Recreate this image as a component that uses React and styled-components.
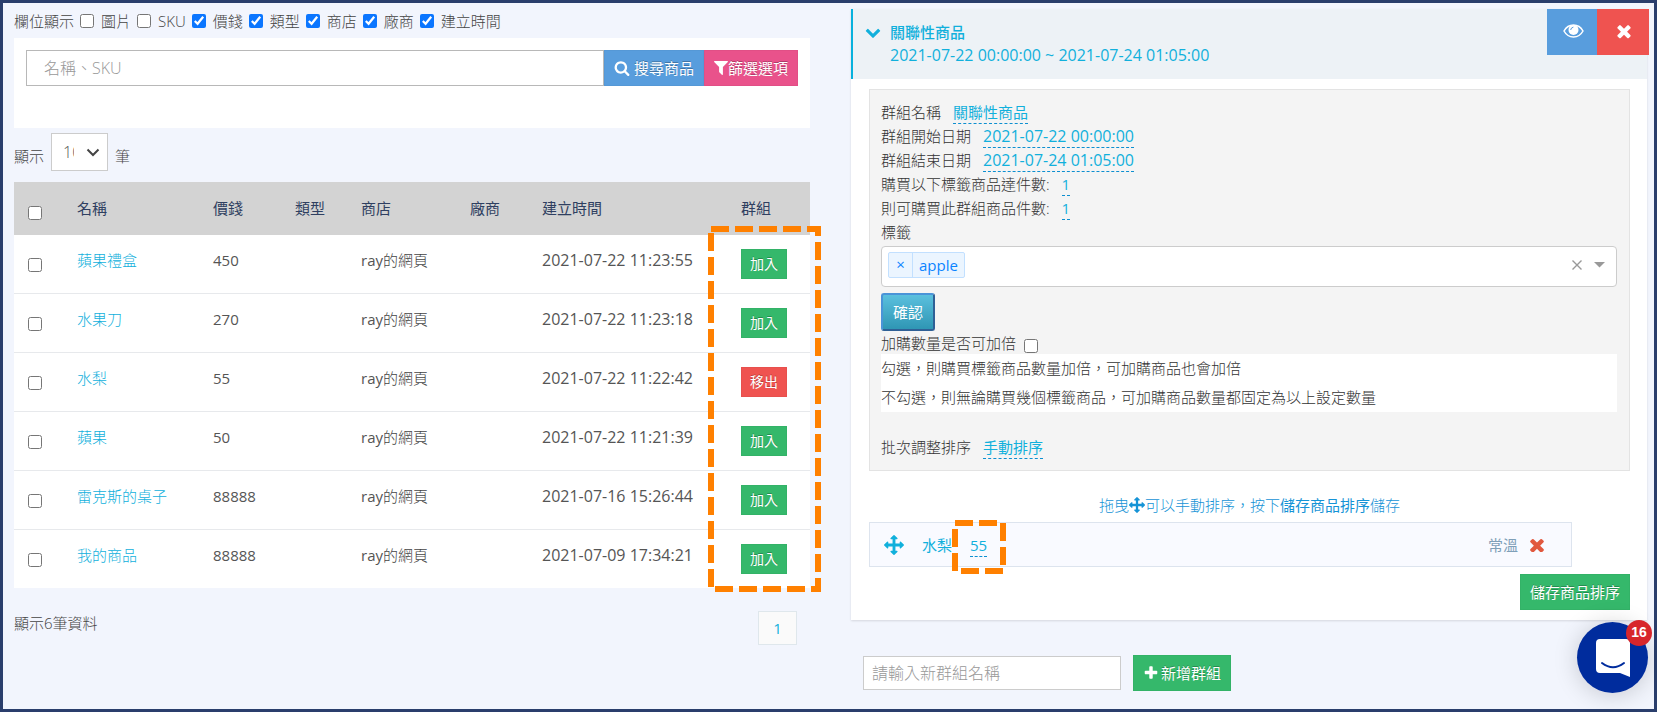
import React from "react";
import styled, { createGlobalStyle, css } from "styled-components";

const GlobalStyle = createGlobalStyle`
  *, *::before, *::after { box-sizing: border-box; }
  body {
    margin: 0;
    background: #f2f5fd;
    color: #444;
    font-family: "Open Sans", "Noto Sans CJK TC", sans-serif;
    font-size: 15px;
    font-weight: 300;
    line-height: 24px;
  }
  button, input, select { font: inherit; margin: 0; border-radius: 0; }
  button { cursor: pointer; }
  p { margin: 0; }
`;

const COLORS = {
  link: "#11b0dc",
  green: "#35b86b",
  red: "#ef5350",
  blue: "#589ddd",
  pink: "#e9528b",
  orange: "#ff8000",
};

/* ---------- icons ---------- */

const ICONS = {
  times:
    "M1490 1322q0 40-28 68l-136 136q-28 28-68 28t-68-28l-294-294-294 294q-28 28-68 28t-68-28l-136-136q-28-28-28-68t28-68l294-294-294-294q-28-28-28-68t28-68l136-136q28-28 68-28t68 28l294 294 294-294q28-28 68-28t68 28l136 136q28 28 28 68t-28 68l-294 294 294 294q28 28 28 68z",
  search:
    "M1216 832q0-185-131.5-316.5t-316.5-131.5-316.5 131.5-131.5 316.5 131.5 316.5 316.5 131.5 316.5-131.5 131.5-316.5zm512 832q0 52-38 90t-90 38q-54 0-90-38l-343-342q-179 124-399 124-143 0-273.5-55.5t-225-150-150-225-55.5-273.5 55.5-273.5 150-225 225-150 273.5-55.5 273.5 55.5 225 150 150 225 55.5 273.5q0 220-124 399l343 343q37 37 37 90z",
  filter:
    "M1595 295q17 41-14 70l-493 493v742q0 42-39 59-13 5-25 5-27 0-45-19l-256-256q-19-19-19-45v-486l-493-493q-31-29-14-70 17-39 59-39h1280q42 0 59 39z",
  plus: "M1600 736v192q0 40-28 68t-68 28h-416v416q0 40-28 68t-68 28h-192q-40 0-68-28t-28-68v-416h-416q-40 0-68-28t-28-68v-192q0-40 28-68t68-28h416v-416q0-40 28-68t68-28h192q40 0 68 28t28 68v416h416q40 0 68 28t28 68z",
  arrows:
    "M1792 896q0 26-19 45l-256 256q-19 19-45 19t-45-19-19-45v-128h-384v384h128q26 0 45 19t19 45-19 45l-256 256q-19 19-45 19t-45-19l-256-256q-19-19-19-45t19-45 45-19h128v-384h-384v128q0 26-19 45t-45 19-45-19l-256-256q-19-19-19-45t19-45l256-256q19-19 45-19t45 19 19 45v128h384v-384h-128q-26 0-45-19t-19-45 19-45l256-256q19-19 45-19t45 19l256 256q19 19 19 45t-19 45-45 19h-128v384h384v-128q0-26 19-45t45-19 45 19l256 256q19 19 19 45z",
  chevron:
    "M1683 808l-742 741q-19 19-45 19t-45-19l-742-741q-19-19-19-45.5t19-45.5l166-165q19-19 45-19t45 19l531 531 531-531q19-19 45-19t45 19l166 165q19 19 19 45.5t-19 45.5z",
};

const IconSvg = styled.svg`
  flex: none;
  width: ${(p) => p.$size}px;
  height: ${(p) => p.$size}px;
  fill: currentColor;
`;

function Icon({ name, size = 16, box = "0 0 1792 1792" }) {
  return (
    <IconSvg $size={size} viewBox={box} aria-hidden="true">
      <path d={ICONS[name]} />
    </IconSvg>
  );
}

function EyeIcon() {
  return (
    <svg width="21" height="14" viewBox="0 0 21 14" fill="none" aria-hidden="true">
      <path
        d="M1 7C3.200 3 6.600 1 10.500 1S17.800 3 20 7c-2.200 4-5.600 6-9.500 6S3.200 11 1 7z"
        stroke="#fff"
        strokeWidth="1.500"
      />
      <circle cx="10.500" cy="5.900" r="5" fill="#fff" />
      <path d="M7.700 5.600Q8 3.500 10 3.200" stroke={COLORS.blue} strokeWidth="1" strokeLinecap="round" />
    </svg>
  );
}

/* ---------- shared parts ---------- */

const Checkbox = styled.input.attrs({ type: "checkbox" })`
  flex: none;
  display: block;
  width: 14px;
  height: 14px;
  accent-color: #0b76ff;
`;

const Button = styled.button`
  display: inline-flex;
  align-items: center;
  justify-content: center;
  flex: none;
  height: ${(p) => (p.$small ? 30 : 36)}px;
  padding: 0 ${(p) => (p.$small ? 8 : 9)}px;
  gap: ${(p) => p.$gap || 0}px;
  border: 1px solid rgba(0, 0, 0, 0.03);
  background: ${(p) => COLORS[p.$tone]};
  color: #fff;
  font-size: ${(p) => (p.$small ? 14 : 15)}px;
  font-weight: 400;
  white-space: nowrap;
  text-shadow: 0 -1px 0 rgba(0, 0, 0, 0.25);
`;

const Link = styled.a`
  color: ${COLORS.link};
  text-decoration: none;
`;

const Editable = styled(Link)`
  display: inline-block;
  height: 24px;
  border-bottom: 1px dashed #0d8fd0;
  font-size: ${(p) => (p.$date ? 16 : 15)}px;
  font-weight: 400;
`;

const DashedBox = styled.svg`
  position: absolute;
  pointer-events: none;
  overflow: visible;
  z-index: 2;
  rect {
    width: calc(100% - 6px);
    height: calc(100% - 6px);
    fill: none;
    stroke: ${COLORS.orange};
    stroke-width: 6;
    stroke-dasharray: 18 6;
  }
`;

const TableMarker = styled(DashedBox)`
  top: 44px;
  right: -11px;
  width: 113px;
  height: calc(100% - 40px);
`;

const PriceMarker = styled(DashedBox)`
  top: -13px;
  left: -18px;
  width: 54px;
  height: 54px;
`;

/* ---------- page ---------- */

const Page = styled.div`
  min-height: 100vh;
  border: 3px solid #2a3e6c;
  display: grid;
  grid-template-columns: minmax(0, 1fr) minmax(0, 1fr);
  gap: 41px;
  padding: 6px 7px 15px 11px;
`;

const Column = styled.div`
  display: flex;
  flex-direction: column;
`;

/* ---------- product list ---------- */

const FieldBar = styled.div`
  display: flex;
  align-items: center;
  gap: 6px;
  height: 29px;
  padding-bottom: 5px;
`;

const FieldOption = styled.label`
  display: flex;
  align-items: center;
  gap: 7px;
`;

const SearchPanel = styled.form`
  display: flex;
  align-items: flex-start;
  height: 90px;
  padding: 12px;
  background: #fff;
`;

const SearchInput = styled.input`
  flex: 1;
  min-width: 0;
  height: 36px;
  padding: 0 17px;
  border: 1px solid #b8b8b8;
  background: #fff;
  font-size: 16px;
  &::placeholder { color: #999; opacity: 1; }
`;

const LengthBar = styled.label`
  display: flex;
  align-items: center;
  gap: 7px;
  padding: 5px 0 11px;
`;

const LengthLabel = styled.span`
  padding-top: 8px;
`;

const LengthBox = styled.span`
  position: relative;
  display: flex;
  svg {
    position: absolute;
    top: 15px;
    right: 8px;
    pointer-events: none;
  }
`;

const LengthSelect = styled.select`
  appearance: none;
  width: 57px;
  height: 38px;
  padding: 0 33px 0 11px;
  border: 1px solid #ccc;
  background: #fff;
  color: #555;
  font-size: 16px;
`;

const TableWrap = styled.div`
  position: relative;
`;

const Table = styled.table`
  width: 100%;
  table-layout: fixed;
  border-collapse: separate;
  border-spacing: 0;
  background: #fff;
  white-space: nowrap;
`;

const cell = css`
  padding: 0 0 0 10px;
  text-align: left;
  vertical-align: top;
`;

const Th = styled.th`
  ${cell};
  height: 53px;
  padding-top: 14px;
  background: #d3d3d3;
  color: #2f3f61;
  font-weight: 400;
`;

const Td = styled.td`
  ${cell};
  height: ${(p) => (p.$last ? 58 : 59)}px;
  padding-top: ${(p) => (p.$action ? 14 : 13)}px;
  border-bottom: ${(p) => (p.$last ? 0 : 1)}px solid #e7e9ec;
  font-size: ${(p) => (p.$date ? 16 : 15)}px;
`;

const Num = styled.span`
  color: #555;
  font-weight: 400;
`;

const CheckSlot = styled.div`
  padding: 10px 0 0 4px;
`;

const TableFoot = styled.div`
  display: flex;
  justify-content: space-between;
  padding: 23px 13px 0 0;
`;

const PageButton = styled.button`
  width: 39px;
  height: 34px;
  border: 1px solid #dfe7ec;
  background: #fafafa;
  color: ${COLORS.link};
  font-weight: 400;
`;

/* ---------- group card ---------- */

const Card = styled.section`
  background: #fff;
  box-shadow: 0 1px 2px rgba(0, 0, 0, 0.12);
`;

const CardHeader = styled.header`
  display: flex;
  justify-content: space-between;
  height: 70px;
  padding-left: 12px;
  border-left: 2px solid #08b1dd;
  background: #edf2f6;
  color: ${COLORS.link};
`;

const CardTitle = styled.div`
  display: flex;
  align-items: flex-start;
  gap: 9px;
  padding-top: 12px;
  svg { margin-top: 3px; }
`;

const TitleText = styled.h2`
  margin: 0;
  font-size: 15px;
  font-weight: 500;
  line-height: 23px;
`;

const TitleDates = styled.span`
  display: block;
  font-size: 16px;
`;

const HeaderActions = styled.div`
  display: flex;
  flex: none;
  margin-right: -2px;
`;

const HeaderButton = styled.button`
  display: flex;
  align-items: center;
  justify-content: center;
  width: ${(p) => p.$width}px;
  height: 46px;
  padding: 0 0 2px 2px;
  border: 0;
  background: ${(p) => COLORS[p.$tone]};
  color: #fff;
`;

const CardBody = styled.div`
  display: flex;
  flex-direction: column;
  padding: 10px 17px 10px 18px;
`;

const Settings = styled.div`
  min-height: 381px;
  padding: 10px 12px 11px 11px;
  border: 1px solid #e3e3e3;
  background: #f4f4f4;
  color: #333;
`;

const Field = styled.div`
  display: flex;
  gap: 12px;
  height: 24px;
`;

const TagLabel = styled.label`
  display: block;
  height: 26px;
`;

const TagSelect = styled.div`
  display: flex;
  align-items: center;
  height: 41px;
  padding: 0 11px 3px 6px;
  border: 1px solid #ccc;
  border-radius: 4px;
  background: #fff;
`;

const Tag = styled.span`
  display: flex;
  height: 26px;
  border: 1px solid #c2e0ff;
  border-radius: 2px;
  background: #ebf5ff;
  color: #0a84ff;
  font-weight: 400;
`;

const TagRemove = styled.button`
  width: 24px;
  padding: 0 0 2px;
  border: 0;
  border-right: 1px solid #c2e0ff;
  background: none;
  color: inherit;
  line-height: 20px;
`;

const TagText = styled.span`
  padding: 0 6px;
`;

const TagInput = styled.input`
  flex: 1;
  min-width: 0;
  border: 0;
  outline: 0;
  background: none;
`;

const SelectControl = styled.button`
  display: flex;
  padding: 0;
  margin-left: 12px;
  border: 0;
  background: none;
  color: #999;
`;

const ConfirmButton = styled.button`
  display: block;
  height: 38px;
  margin: 6px 0 0;
  padding: 0 10px;
  border: 2px solid;
  border-color: #4a94d8 #2f6096 #2f6096 #4a94d8;
  border-radius: 3px;
  background: linear-gradient(#5bc0de, #2f96b4);
  color: #fff;
  font-weight: 400;
  line-height: 20px;
`;

const MultiplyField = styled.label`
  display: flex;
  gap: 8px;
  height: 23px;
  input { margin-top: 8px; }
`;

const Notes = styled.div`
  background: #fff;
  margin-bottom: 23px;
  p { line-height: 29px; }
`;

const Hint = styled.p`
  display: flex;
  align-items: center;
  justify-content: center;
  margin: 22px 0 5px;
  color: #1593d6;
  strong { font-weight: 400; }
`;

const Item = styled.div`
  display: flex;
  align-items: center;
  height: 45px;
  margin-right: 58px;
  padding: 0 27px 0 14px;
  border: 1px solid #dde4ee;
  background: #f9faff;
  color: ${COLORS.link};
`;

const ItemName = styled.span`
  margin: 0 18px;
  font-weight: 400;
`;

const ItemPrice = styled.span`
  position: relative;
  height: 24px;
`;

const ItemTemp = styled.span`
  margin: 0 12px 0 auto;
  color: #7f9fb8;
  font-weight: 400;
`;

const RemoveButton = styled.button`
  display: flex;
  padding: 0;
  border: 0;
  background: none;
  color: #e1583e;
`;

const SaveRow = styled.div`
  display: flex;
  justify-content: flex-end;
  margin-top: 7px;
`;

const NewGroup = styled.form`
  display: flex;
  align-items: center;
  gap: 12px;
  padding: 35px 12px 0;
`;

const NewGroupInput = styled.input`
  width: 258px;
  height: 34px;
  padding: 0 8px;
  border: 1px solid #ccc;
  background: #fff;
  font-size: 16px;
  &::placeholder { color: #999; opacity: 1; }
`;

/* ---------- chat launcher ---------- */

const Launcher = styled.button`
  position: fixed;
  right: 9px;
  bottom: 19px;
  width: 71px;
  height: 71px;
  padding: 0;
  border: 0;
  border-radius: 50%;
  background: #002c9d;
  box-shadow: 0 2px 24px rgba(0, 0, 0, 0.18);
  display: flex;
  align-items: center;
  justify-content: center;
  z-index: 3;
`;

const LauncherBadge = styled.span`
  position: absolute;
  top: -2px;
  right: -4px;
  width: 26px;
  height: 26px;
  border-radius: 50%;
  background: #d7262b;
  color: #fff;
  font: bold 14px/25px "Liberation Sans", Arial, sans-serif;
  text-align: center;
`;

const FIELDS = [
  ["圖片", false],
  ["SKU", false],
  ["價錢", true],
  ["類型", true],
  ["商店", true],
  ["廠商", true],
  ["建立時間", true],
];

const COLUMNS = [
  ["名稱", undefined],
  ["價錢", 82],
  ["類型", 66],
  ["商店", 109],
  ["廠商", 72],
  ["建立時間", 199],
  ["群組", 79],
];

const PRODUCTS = [
  { name: "蘋果禮盒", price: 450, time: "2021-07-22 11:23:55" },
  { name: "水果刀", price: 270, time: "2021-07-22 11:23:18" },
  { name: "水梨", price: 55, time: "2021-07-22 11:22:42", joined: true },
  { name: "蘋果", price: 50, time: "2021-07-22 11:21:39" },
  { name: "雷克斯的桌子", price: 88888, time: "2021-07-16 15:26:44" },
  { name: "我的商品", price: 88888, time: "2021-07-09 17:34:21" },
];

const SETTINGS = [
  { label: "群組名稱", value: "關聯性商品" },
  { label: "群組開始日期", value: "2021-07-22 00:00:00", date: true },
  { label: "群組結束日期", value: "2021-07-24 01:05:00", date: true },
  { label: "購買以下標籤商品達件數:", value: "1" },
  { label: "則可購買此群組商品件數:", value: "1" },
];

const stop = (e) => e.preventDefault();

function ProductList() {
  return (
    <Column>
      <FieldBar>
        <span>欄位顯示</span>
        {FIELDS.map(([label, on]) => (
          <FieldOption key={label}>
            <Checkbox defaultChecked={on} />
            {label}
          </FieldOption>
        ))}
      </FieldBar>
      <SearchPanel onSubmit={stop}>
        <SearchInput placeholder="名稱、SKU" aria-label="名稱、SKU" />
        <Button $tone="blue" $gap={4}>
          <Icon name="search" />
          搜尋商品
        </Button>
        <Button type="button" $tone="pink">
          <Icon name="filter" size={14} box="192 256 1408 1408" />
          篩選選項
        </Button>
      </SearchPanel>
      <LengthBar>
        <LengthLabel>顯示</LengthLabel>
        <LengthBox>
          <LengthSelect defaultValue="10">
            <option>10</option>
            <option>25</option>
            <option>50</option>
          </LengthSelect>
          <svg width="14" height="9" viewBox="0 0 14 9" fill="none" aria-hidden="true">
            <path d="M1.500 1.500L7 7l5.500-5.500" stroke="#444" strokeWidth="2" />
          </svg>
        </LengthBox>
        <LengthLabel>筆</LengthLabel>
      </LengthBar>
      <TableWrap>
        <Table>
          <colgroup>
            <col width={53} />
            {COLUMNS.map(([label, width]) => (
              <col key={label} width={width} />
            ))}
          </colgroup>
          <thead>
            <tr>
              <Th>
                <CheckSlot>
                  <Checkbox aria-label="全選" />
                </CheckSlot>
              </Th>
              {COLUMNS.map(([label]) => (
                <Th key={label}>{label}</Th>
              ))}
            </tr>
          </thead>
          <tbody>
            {PRODUCTS.map((p, i) => {
              const last = i === PRODUCTS.length - 1;
              return (
                <tr key={p.name}>
                  <Td $last={last}>
                    <CheckSlot>
                      <Checkbox aria-label={p.name} />
                    </CheckSlot>
                  </Td>
                  <Td $last={last}>
                    <Link href="#">{p.name}</Link>
                  </Td>
                  <Td $last={last}>
                    <Num>{p.price}</Num>
                  </Td>
                  <Td $last={last} />
                  <Td $last={last}>
                    <Num>ray</Num>的網頁
                  </Td>
                  <Td $last={last} />
                  <Td $last={last} $date>
                    <Num>{p.time}</Num>
                  </Td>
                  <Td $last={last} $action>
                    <Button $small $tone={p.joined ? "red" : "green"}>
                      {p.joined ? "移出" : "加入"}
                    </Button>
                  </Td>
                </tr>
              );
            })}
          </tbody>
        </Table>
        <TableMarker aria-hidden="true">
          <rect x="3" y="3" />
        </TableMarker>
      </TableWrap>
      <TableFoot>
        <span>顯示6筆資料</span>
        <PageButton>1</PageButton>
      </TableFoot>
    </Column>
  );
}

function GroupCard() {
  return (
    <Card>
      <CardHeader>
        <CardTitle>
          <Icon name="chevron" size={16} />
          <TitleText>
            關聯性商品
            <TitleDates>2021-07-22 00:00:00 ~ 2021-07-24 01:05:00</TitleDates>
          </TitleText>
        </CardTitle>
        <HeaderActions>
          <HeaderButton $tone="blue" $width={50} aria-label="檢視">
            <EyeIcon />
          </HeaderButton>
          <HeaderButton $tone="red" $width={52} aria-label="刪除">
            <Icon name="times" size={20} />
          </HeaderButton>
        </HeaderActions>
      </CardHeader>
      <CardBody>
        <Settings>
          {SETTINGS.map(({ label, value, date }) => (
            <Field key={label}>
              <span>{label}</span>
              <Editable href="#" $date={date}>
                {value}
              </Editable>
            </Field>
          ))}
          <TagLabel htmlFor="tags">標籤</TagLabel>
          <TagSelect>
            <Tag>
              <TagRemove aria-label="移除 apple">×</TagRemove>
              <TagText>apple</TagText>
            </Tag>
            <TagInput id="tags" />
            <SelectControl aria-label="清除">
              <svg width="10" height="10" viewBox="0 0 10 10">
                <path d="M.5.5l9 9M9.500.5l-9 9" stroke="currentColor" strokeWidth="1.400" />
              </svg>
            </SelectControl>
            <SelectControl aria-label="展開">
              <svg width="11" height="6" viewBox="0 0 11 6">
                <path d="M0 0h11L5.500 5.500z" fill="currentColor" />
              </svg>
            </SelectControl>
          </TagSelect>
          <ConfirmButton>確認</ConfirmButton>
          <MultiplyField>
            加購數量是否可加倍
            <Checkbox />
          </MultiplyField>
          <Notes>
            <p>勾選，則購買標籤商品數量加倍，可加購商品也會加倍</p>
            <p>不勾選，則無論購買幾個標籤商品，可加購商品數量都固定為以上設定數量</p>
          </Notes>
          <Field>
            <span>批次調整排序</span>
            <Editable href="#">手動排序</Editable>
          </Field>
        </Settings>
        <Hint>
          拖曳
          <Icon name="arrows" size={16} />
          可以手動排序，按下<strong>儲存商品排序</strong>儲存
        </Hint>
        <Item>
          <Icon name="arrows" size={20} />
          <ItemName>水梨</ItemName>
          <ItemPrice>
            <Editable href="#">55</Editable>
            <PriceMarker aria-hidden="true">
              <rect x="3" y="3" />
            </PriceMarker>
          </ItemPrice>
          <ItemTemp>常溫</ItemTemp>
          <RemoveButton aria-label="移除">
            <Icon name="times" size={14} box="288 288 1216 1216" />
          </RemoveButton>
        </Item>
        <SaveRow>
          <Button $tone="green">儲存商品排序</Button>
        </SaveRow>
      </CardBody>
    </Card>
  );
}

export default function App() {
  return (
    <>
      <GlobalStyle />
      <Page>
        <ProductList />
        <Column>
          <GroupCard />
          <NewGroup onSubmit={stop}>
            <NewGroupInput placeholder="請輸入新群組名稱" aria-label="請輸入新群組名稱" />
            <Button $tone="green" $gap={2}>
              <Icon name="plus" />
              新增群組
            </Button>
          </NewGroup>
        </Column>
      </Page>
      <Launcher aria-label="聊天">
        <svg width="34" height="38" viewBox="0 0 34 38">
          <path d="M4 0h26a4 4 0 0 1 4 4v34l-10-4H4a4 4 0 0 1-4-4V4a4 4 0 0 1 4-4z" fill="#fff" />
          <path d="M6 24q11 8.500 22 0" fill="none" stroke="#002c9d" strokeWidth="2" strokeLinecap="round" />
        </svg>
        <LauncherBadge>16</LauncherBadge>
      </Launcher>
    </>
  );
}
